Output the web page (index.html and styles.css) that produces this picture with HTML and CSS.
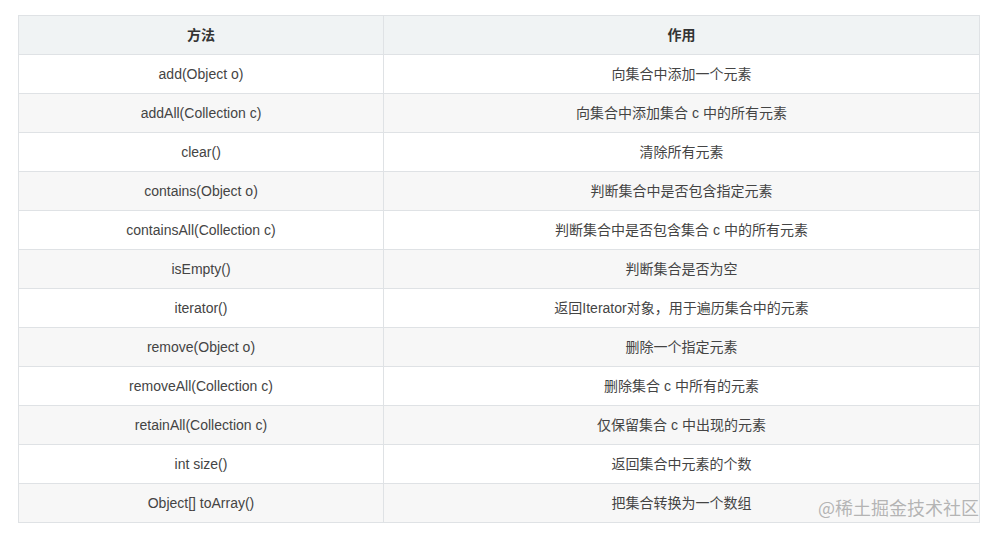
FILE: index.html
```html
<!DOCTYPE html>
<html lang="zh">
<head>
<meta charset="utf-8">
<link rel="stylesheet" href="styles.css">
</head>
<body>
<div class="page">
  <table class="api">
    <thead>
      <tr><th class="c1">方法</th><th>作用</th></tr>
    </thead>
    <tbody>
      <tr><td>add(Object o)</td><td>向集合中添加一个元素</td></tr>
      <tr><td>addAll(Collection c)</td><td>向集合中添加集合 c 中的所有元素</td></tr>
      <tr><td>clear()</td><td>清除所有元素</td></tr>
      <tr><td>contains(Object o)</td><td>判断集合中是否包含指定元素</td></tr>
      <tr><td>containsAll(Collection c)</td><td>判断集合中是否包含集合 c 中的所有元素</td></tr>
      <tr><td>isEmpty()</td><td>判断集合是否为空</td></tr>
      <tr><td>iterator()</td><td>返回Iterator对象，用于遍历集合中的元素</td></tr>
      <tr><td>remove(Object o)</td><td>删除一个指定元素</td></tr>
      <tr><td>removeAll(Collection c)</td><td>删除集合 c 中所有的元素</td></tr>
      <tr><td>retainAll(Collection c)</td><td>仅保留集合 c 中出现的元素</td></tr>
      <tr><td>int size()</td><td>返回集合中元素的个数</td></tr>
      <tr><td>Object[] toArray()</td><td>把集合转换为一个数组</td></tr>
    </tbody>
  </table>
  <div class="watermark">@稀土掘金技术社区</div>
</div>
</body>
</html>
```

FILE: styles.css
```css
html, body {
  margin: 0;
  padding: 0;
  background: #fff;
}
.page {
  position: relative;
  width: 962px;
  padding: 15px 18px;
  font-family: "Liberation Sans", Arial, "Noto Sans CJK SC", sans-serif;
  color: #444;
  font-size: 14px;
}
.api {
  width: 962px;
  border-collapse: collapse;
  table-layout: fixed;
}
.api th, .api td {
  height: 38px;
  padding: 0 8px;
  border: 1px solid #dfe2e5;
  text-align: center;
  vertical-align: middle;
  line-height: 20px;
}
.api th {
  background: #f0f3f4;
  font-weight: bold;
  color: #333;
}
.api th.c1 {
  width: 348px;
}
.api tbody tr:nth-child(even) td {
  background: #f7f7f7;
}
.api tbody tr:nth-child(odd) td {
  background: #fff;
}
.watermark {
  position: absolute;
  right: 19px;
  bottom: 20px;
  font-family: "Noto Sans CJK SC", sans-serif;
  font-size: 18px;
  line-height: 22px;
  color: rgba(150, 150, 150, 0.7);
}
```
